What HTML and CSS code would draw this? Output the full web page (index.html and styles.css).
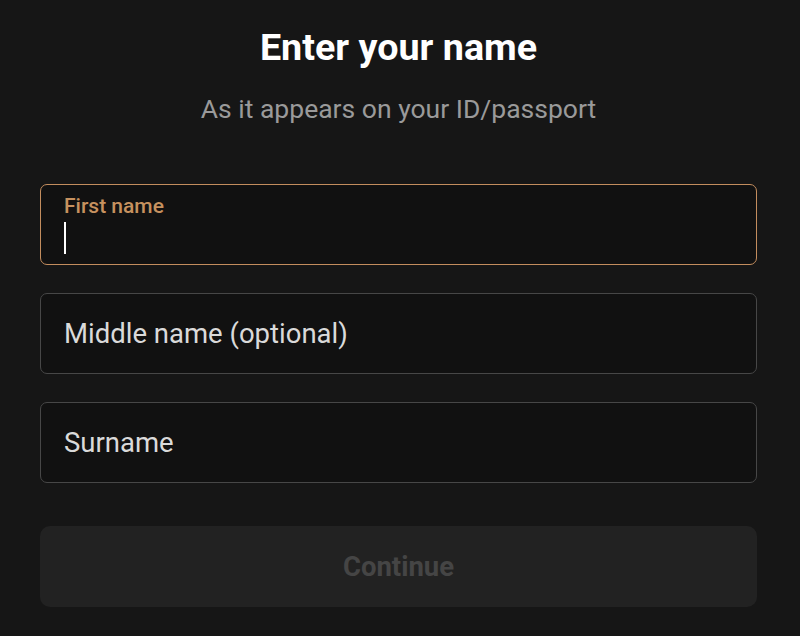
FILE: index.html
```html
<!DOCTYPE html>
<html lang="en">
<head>
<meta charset="utf-8">
<title>Enter your name</title>
<link rel="stylesheet" href="styles.css">
</head>
<body>
<main class="page">
  <h1 class="title">Enter your name</h1>
  <p class="subtitle">As it appears on your ID/passport</p>
  <form class="form">
    <div class="field field--active">
      <span class="field__label">First name</span>
      <span class="field__caret"></span>
    </div>
    <div class="field">
      <span class="field__placeholder">Middle name (optional)</span>
    </div>
    <div class="field">
      <span class="field__placeholder">Surname</span>
    </div>
    <button type="button" class="continue" disabled>Continue</button>
  </form>
</main>
</body>
</html>
```

FILE: styles.css
```css
html, body {
  margin: 0;
  padding: 0;
  background: #161616;
  height: 100%;
}
body {
  font-family: Roboto, "Noto Sans", sans-serif;
  color: #fff;
}
.page {
  padding: 25px 43px 0 40px;
  display: flex;
  flex-direction: column;
}
.title {
  margin: 0;
  text-align: center;
  font-size: 37.7px;
  font-weight: 700;
  line-height: 44px;
  color: #fff;
}
.subtitle {
  margin: 24px 0 0;
  text-align: center;
  font-size: 26.5px;
  line-height: 32px;
  color: #9a9a9a;
}
.form {
  margin-top: 59px;
  display: flex;
  flex-direction: column;
  gap: 28px;
}
.field {
  box-sizing: border-box;
  height: 81px;
  border: 1.5px solid #474747;
  border-radius: 7px;
  background: #111;
  padding: 0 23px;
  display: flex;
  flex-direction: column;
  justify-content: center;
}
.field--active {
  border-color: #c38d5e;
  justify-content: flex-start;
  padding-top: 8.5px;
}
.field__label {
  font-size: 21px;
  font-weight: 500;
  line-height: 24px;
  color: #c6915f;
}
.field__caret {
  display: block;
  width: 2px;
  height: 32px;
  margin-top: 4px;
  background: #fff;
}
.field__placeholder {
  font-size: 27.5px;
  line-height: 32px;
  color: #dadada;
}
.continue {
  margin-top: 15px;
  height: 81px;
  border: 0;
  border-radius: 10px;
  background: #222;
  color: #454545;
  font-family: inherit;
  font-size: 27.5px;
  font-weight: 700;
}
```
